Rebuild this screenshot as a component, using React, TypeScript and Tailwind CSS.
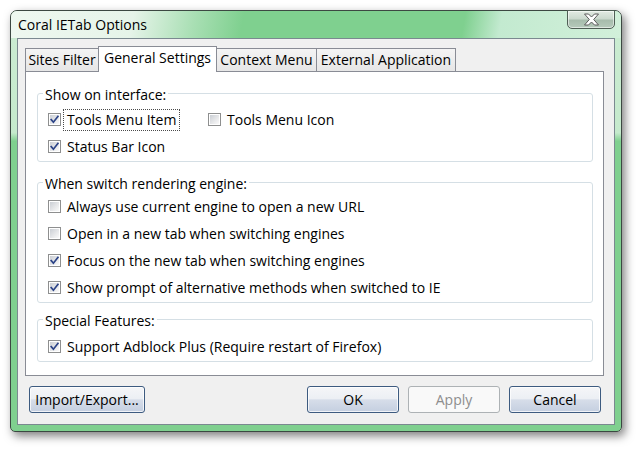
import React from "react";

function Check({ checked }: { checked: boolean }) {
  return (
    <span className="relative flex h-[13px] w-[13px] shrink-0 border border-[#8e8f8f] bg-white p-[1px]">
      <span className="block h-full w-full bg-[linear-gradient(135deg,#caced4_0%,#e6e7e9_55%,#fafafa_100%)]" />
      {checked && (
        <svg className="absolute left-0 top-0" width="11" height="11" viewBox="0 0 11 11">
          <path d="M2.2 5.6 L4.4 8.2 L8.9 2.4" fill="none" stroke="#2b4387" strokeWidth="1.7" strokeLinecap="square" />
        </svg>
      )}
    </span>
  );
}

function Item({
  label,
  checked,
  focus,
  className = "",
}: {
  label: string;
  checked: boolean;
  focus?: boolean;
  className?: string;
}) {
  return (
    <div className={`flex h-[27px] items-center ${className}`}>
      <Check checked={checked} />
      <span
        className={`ml-[2px] border px-[3px] leading-[20px] whitespace-nowrap ${
          focus ? "border-dotted border-[#4a4a4a]" : "border-transparent"
        }`}
      >
        {label}
      </span>
    </div>
  );
}

function Group({
  title,
  children,
  className = "",
}: {
  title: string;
  children: React.ReactNode;
  className?: string;
}) {
  return (
    <div className={`relative rounded-[3px] border border-[#d5dfe5] pl-[10px] ${className}`}>
      <span className="absolute left-[5px] top-[-8px] bg-white px-[2px] leading-[18px] whitespace-nowrap">
        {title}
      </span>
      {children}
    </div>
  );
}

const btn =
  "h-[27px] w-[92px] rounded-[3px] border border-[#3d5b80] bg-[linear-gradient(to_bottom,#f5f6f8_0%,#eceff4_46%,#d6dde9_52%,#c4cfe0_100%)] shadow-[inset_0_0_0_1px_rgba(255,255,255,0.75)] text-[14px] leading-[20px] text-black";

const tabBase =
  "-ml-px flex h-[23px] items-center justify-center border-l border-r border-t border-[#898c95] bg-[linear-gradient(to_bottom,#f4f4f4,#e6e6e6)] leading-[20px] whitespace-nowrap";

export default function App() {
  return (
    <div className="h-[450px] w-[640px] bg-white pl-[10px] pt-[10px] font-['Open_Sans',sans-serif] text-[14px] text-black">
      <div className="relative flex h-[422px] w-[612px] flex-col rounded-t-[7px] rounded-b-[5px] border border-[#3c4842] bg-[linear-gradient(to_bottom,rgba(255,255,255,0.6)_0%,rgba(255,255,255,0.55)_29%,rgba(255,255,255,0)_31%),linear-gradient(to_bottom,#7fd08f,#7fd08f)] shadow-[3px_4px_10px_rgba(0,0,0,0.5)]">
        {/* title bar */}
        <div className="flex h-[27px] items-center rounded-t-[6px] bg-[linear-gradient(100deg,#eef8f0_0%,#e6f4e9_20%,#a9dfb4_30%,#7fd08f_38%,#7fd08f_72%,#7fd08f_74%,#c3ead0_80%,#d2f0da_100%)] pl-[7px] leading-[20px]">
          Coral IETab Options
        </div>
        {/* close button */}
        <div className="absolute right-[6px] top-[-1px] flex h-[19px] w-[48px] items-center justify-center rounded-b-[5px] border border-[#4e5e54] bg-[linear-gradient(to_bottom,#e2ebe3_0%,#cbd9ce_45%,#a7bcac_55%,#b6cabb_100%)] shadow-[inset_0_0_0_1px_rgba(255,255,255,0.55)]">
          <svg width="17" height="13" viewBox="0 0 17 13">
            <polygon
              points="1.5,1 5.5,1 8.5,4 11.5,1 15.5,1 10.7,6.5 15.5,12 11.5,12 8.5,9 5.5,12 1.5,12 6.3,6.5"
              fill="#ffffff"
              stroke="#5a5a5a"
              strokeWidth="1"
              strokeLinejoin="round"
            />
          </svg>
        </div>

        {/* client area */}
        <div className="mx-[6px] flex h-[387px] flex-col border border-[#7b8990] bg-[#f0f0f0]">
          {/* tabs */}
          <div className="flex h-[25px] items-end pl-[8px] pt-0 mt-[7px]">
            <div className={`${tabBase} w-[74px]`}>Sites Filter</div>
            <div className="relative z-10 -mb-px -ml-px flex h-[26px] w-[119px] items-center justify-center border-l border-r border-t border-[#898c95] bg-white pb-[3px] leading-[20px] whitespace-nowrap">
              General Settings
            </div>
            <div className={`${tabBase} w-[101px]`}>Context Menu</div>
            <div className={`${tabBase} w-[140px]`}>External Application</div>
          </div>

          {/* panel */}
          <div className="ml-[7px] mr-[10px] flex h-[305px] flex-col border border-[#898c95] bg-white pl-[11px] pr-[10px] pt-[21px]">
            <Group title="Show on interface:" className="pb-[1px] pt-[12px]">
              <div className="flex">
                <Item label="Tools Menu Item" checked focus className="w-[160px]" />
                <Item label="Tools Menu Icon" checked={false} />
              </div>
              <Item label="Status Bar Icon" checked />
            </Group>

            <Group title="When switch rendering engine:" className="mt-[20px] pb-[1px] pt-[10px]">
              <Item label="Always use current engine to open a new URL" checked={false} />
              <Item label="Open in a new tab when switching engines" checked={false} />
              <Item label="Focus on the new tab when switching engines" checked />
              <Item label="Show prompt of alternative methods when switched to IE" checked />
            </Group>

            <Group title="Special Features:" className="mt-[16px] pb-[1px] pt-[13px]">
              <Item label="Support Adblock Plus (Require restart of Firefox)" checked />
            </Group>
          </div>

          {/* buttons */}
          <div className="mt-[10px] flex h-[27px] pl-[11px] pr-[13px]">
            <button className={`${btn} w-[116px]`}>Import/Export...</button>
            <div className="flex-1" />
            <button className={btn}>OK</button>
            <button
              disabled
              className="ml-[9px] h-[27px] w-[92px] rounded-[3px] border border-[#adb2b5] bg-[#f9f9f9] text-[14px] leading-[20px] text-[#8d8d8d]"
            >
              Apply
            </button>
            <button className={`${btn} ml-[9px]`}>Cancel</button>
          </div>
        </div>
      </div>
    </div>
  );
}
